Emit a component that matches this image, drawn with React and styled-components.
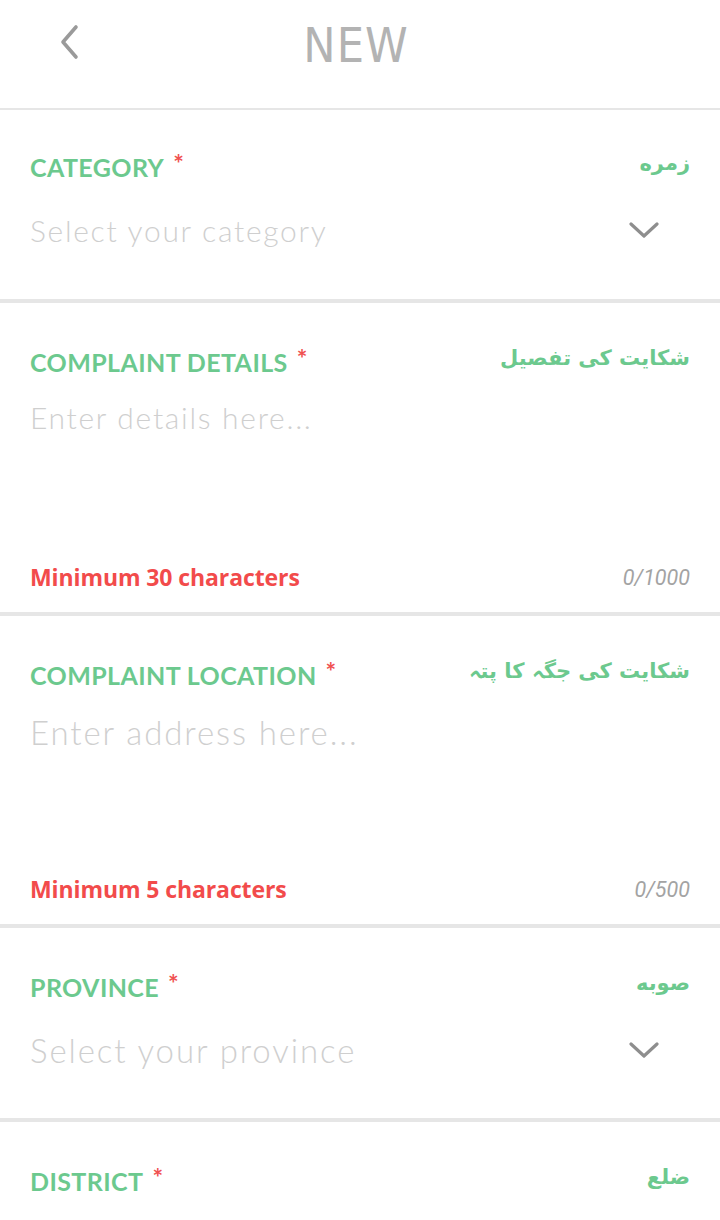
import React from "react"
import styled, { createGlobalStyle } from "styled-components"

const GlobalStyle = createGlobalStyle`
  html, body {
    margin: 0;
    padding: 0;
    background: #ffffff;
  }
  * {
    box-sizing: border-box;
  }
`

const Page = styled.div`
  width: 720px;
  min-height: 1220px;
  background: #fff;
  overflow: hidden;
`

const Header = styled.header`
  position: relative;
  height: 110px;
  display: flex;
  align-items: center;
  justify-content: center;
  border-bottom: 2px solid #e6e6e6;
`

const BackButton = styled.button`
  position: absolute;
  left: 50px;
  top: 20px;
  width: 36px;
  height: 44px;
  border: none;
  background: none;
  padding: 0;
  display: flex;
  align-items: center;
  justify-content: center;
`

const Title = styled.h1`
  margin: 0 8px 18px 0;
  font-family: "Liberation Sans Narrow", "DejaVu Sans Condensed", "Open Sans", sans-serif;
  font-weight: 400;
  font-size: 48px;
  letter-spacing: 1px;
  color: #b3b3b3;
`

const Section = styled.section`
  height: ${p => p.$height}px;
  padding: ${p => p.$top}px 30px 0 30px;
  display: flex;
  flex-direction: column;
  border-bottom: ${p => (p.$last ? "none" : "4px solid #e6e6e6")};
`

const LabelRow = styled.div`
  display: flex;
  justify-content: space-between;
  align-items: center;
  height: 32px;
`

const Label = styled.div`
  font-family: "Lato", "Open Sans", sans-serif;
  font-weight: 700;
  font-size: 25px;
  color: #6cc98e;
  letter-spacing: 0.4px;
`

const Required = styled.span`
  color: #f05151;
  font-size: 25px;
  margin-left: 9px;
  vertical-align: 4px;
`

const Urdu = styled.div`
  direction: rtl;
  font-family: "DejaVu Sans", "Noto Sans", sans-serif;
  font-weight: 700;
  font-size: 21px;
  color: #6cc98e;
  margin-top: ${p => p.$shift || 0}px;
`

const SelectRow = styled.div`
  display: flex;
  justify-content: space-between;
  align-items: center;
  margin-top: ${p => p.$gap}px;
  height: 44px;
`

const Placeholder = styled.div`
  font-family: "Lato", "Open Sans", sans-serif;
  font-weight: 300;
  font-size: ${p => p.$size}px;
  color: #cfcfcf;
  letter-spacing: ${p => (p.$size > 31 ? 1.9 : 1.7)}px;
`

const Caret = styled.div`
  width: 30px;
  margin-right: 31px;
  display: flex;
  justify-content: center;
`

const TextArea = styled.div`
  flex: 1;
  margin-top: ${p => p.$gap}px;
`

const FooterRow = styled.div`
  display: flex;
  justify-content: space-between;
  align-items: center;
  height: 30px;
  margin-bottom: 20px;
`

const Helper = styled.div`
  font-family: "Open Sans", "Lato", sans-serif;
  font-weight: 700;
  font-size: 23px;
  letter-spacing: -0.1px;
  color: #f24b4b;
`

const Counter = styled.div`
  font-family: "Roboto", "Open Sans", sans-serif;
  font-style: italic;
  font-size: 21.5px;
  color: #a3a3a3;
`

const ChevronDown = () => (
  <svg width="30" height="18" viewBox="0 0 30 18">
    <polyline points="2,3 15,15 28,3" fill="none" stroke="#8e8e8e" strokeWidth="3.2" strokeLinecap="round" strokeLinejoin="round" />
  </svg>
)

const ChevronLeft = () => (
  <svg width="24" height="36" viewBox="0 0 24 36">
    <polyline points="20,3 7,18 20,33" fill="none" stroke="#9a9a9a" strokeWidth="3.6" strokeLinecap="round" strokeLinejoin="round" />
  </svg>
)

const Field = ({ label, urdu, urduShift }) => (
  <LabelRow>
    <Label>
      {label}
      <Required>*</Required>
    </Label>
    <Urdu $shift={urduShift}>{urdu}</Urdu>
  </LabelRow>
)

const App = () => (
  <Page>
    <GlobalStyle />
    <Header>
      <BackButton>
        <ChevronLeft />
      </BackButton>
      <Title>NEW</Title>
    </Header>

    <Section $height={193} $top={39}>
      <Field label="CATEGORY" urdu="زمره" urduShift={-5} />
      <SelectRow $gap={27}>
        <Placeholder $size={30}>Select your category</Placeholder>
        <Caret>
          <ChevronDown />
        </Caret>
      </SelectRow>
    </Section>

    <Section $height={313} $top={41}>
      <Field label="COMPLAINT DETAILS" urdu="شکایت کی تفصیل" urduShift={-5} />
      <TextArea $gap={23}>
        <Placeholder $size={30}>Enter details here...</Placeholder>
      </TextArea>
      <FooterRow>
        <Helper>Minimum 30 characters</Helper>
        <Counter>0/1000</Counter>
      </FooterRow>
    </Section>

    <Section $height={312} $top={41}>
      <Field label="COMPLAINT LOCATION" urdu="شکایت کی جگہ کا پتہ" urduShift={-5} />
      <TextArea $gap={23}>
        <Placeholder $size={33}>Enter address here...</Placeholder>
      </TextArea>
      <FooterRow>
        <Helper>Minimum 5 characters</Helper>
        <Counter>0/500</Counter>
      </FooterRow>
    </Section>

    <Section $height={194} $top={41}>
      <Field label="PROVINCE" urdu="صوبه" urduShift={-4} />
      <SelectRow $gap={27}>
        <Placeholder $size={33}>Select your province</Placeholder>
        <Caret>
          <ChevronDown />
        </Caret>
      </SelectRow>
    </Section>

    <Section $height={120} $top={41} $last>
      <Field label="DISTRICT" urdu="ضلع" urduShift={-5} />
    </Section>
  </Page>
)

export default App
